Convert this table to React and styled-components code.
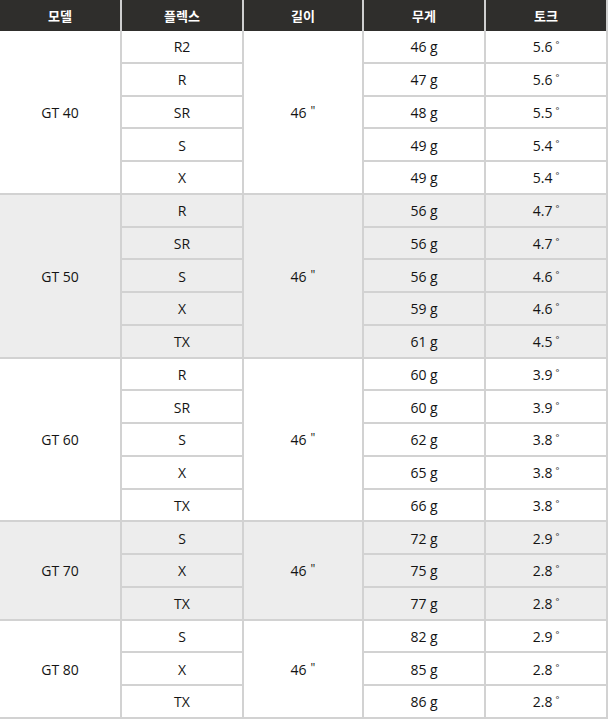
import styled, { createGlobalStyle } from "styled-components";

const GlobalStyle = createGlobalStyle`
  html, body {
    margin: 0;
    padding: 0;
    background: #fff;
  }
  body {
    font-family: "Open Sans", "Noto Sans CJK KR", sans-serif;
  }
`;

const SPECS = [
  {
    model: "GT 40",
    shaded: false,
    rows: [
      ["R2", "46 g", "5.6"],
      ["R", "47 g", "5.6"],
      ["SR", "48 g", "5.5"],
      ["S", "49 g", "5.4"],
      ["X", "49 g", "5.4"],
    ],
  },
  {
    model: "GT 50",
    shaded: true,
    rows: [
      ["R", "56 g", "4.7"],
      ["SR", "56 g", "4.7"],
      ["S", "56 g", "4.6"],
      ["X", "59 g", "4.6"],
      ["TX", "61 g", "4.5"],
    ],
  },
  {
    model: "GT 60",
    shaded: false,
    rows: [
      ["R", "60 g", "3.9"],
      ["SR", "60 g", "3.9"],
      ["S", "62 g", "3.8"],
      ["X", "65 g", "3.8"],
      ["TX", "66 g", "3.8"],
    ],
  },
  {
    model: "GT 70",
    shaded: true,
    rows: [
      ["S", "72 g", "2.9"],
      ["X", "75 g", "2.8"],
      ["TX", "77 g", "2.8"],
    ],
  },
  {
    model: "GT 80",
    shaded: false,
    rows: [
      ["S", "82 g", "2.9"],
      ["X", "85 g", "2.8"],
      ["TX", "86 g", "2.8"],
    ],
  },
];

const HEADERS = ["모델", "플렉스", "길이", "무게", "토크"];

const Table = styled.div`
  display: grid;
  width: 608px;
  grid-template-columns: 122px 122px 120px 122px 122px;
  grid-template-rows: 31px repeat(21, 32.76px);
  background: #2f2e2c;
`;

const Head = styled.div`
  display: flex;
  align-items: center;
  justify-content: center;
  box-sizing: border-box;
  border-right: 2px solid #cfcfcf;
  background: #2f2e2c;
  color: #fff;
  font-family: "Noto Sans CJK KR", "Open Sans", sans-serif;
  font-size: 13px;
  font-weight: 700;
  padding-bottom: 1px;
`;

const Cell = styled.div`
  display: flex;
  align-items: center;
  justify-content: center;
  box-sizing: border-box;
  border-right: 2px solid #d2d2d2;
  border-bottom: 2px solid #d2d2d2;
  background: ${({ shaded }) => (shaded ? "#ededed" : "#fff")};
  color: #141414;
  font-size: 14px;
  padding-top: 1px;
  grid-column: ${({ col }) => col};
  grid-row: ${({ row, span }) => `${row} / span ${span || 1}`};
`;

const Degree = styled.span`
  font-size: 9px;
  margin-left: 3px;
  position: relative;
  top: -2px;
`;

const Inch = styled.span`
  font-size: 12px;
  margin-left: 4px;
  position: relative;
  top: -2px;
`;

const App = () => {
  const cells = [];
  let row = 2;

  SPECS.forEach((group) => {
    const span = group.rows.length;
    cells.push(
      <Cell key={group.model + "m"} col={1} row={row} span={span} shaded={group.shaded}>
        {group.model}
      </Cell>
    );
    cells.push(
      <Cell key={group.model + "l"} col={3} row={row} span={span} shaded={group.shaded}>
        46<Inch>"</Inch>
      </Cell>
    );
    group.rows.forEach(([flex, weight, torque], i) => {
      const r = row + i;
      cells.push(
        <Cell key={r + "f"} col={2} row={r} shaded={group.shaded}>
          {flex}
        </Cell>,
        <Cell key={r + "w"} col={4} row={r} shaded={group.shaded}>
          {weight}
        </Cell>,
        <Cell key={r + "t"} col={5} row={r} shaded={group.shaded}>
          {torque}
          <Degree>°</Degree>
        </Cell>
      );
    });
    row += span;
  });

  return (
    <>
      <GlobalStyle />
      <Table>
        {HEADERS.map((h) => (
          <Head key={h}>{h}</Head>
        ))}
        {cells}
      </Table>
    </>
  );
};

export default App;
